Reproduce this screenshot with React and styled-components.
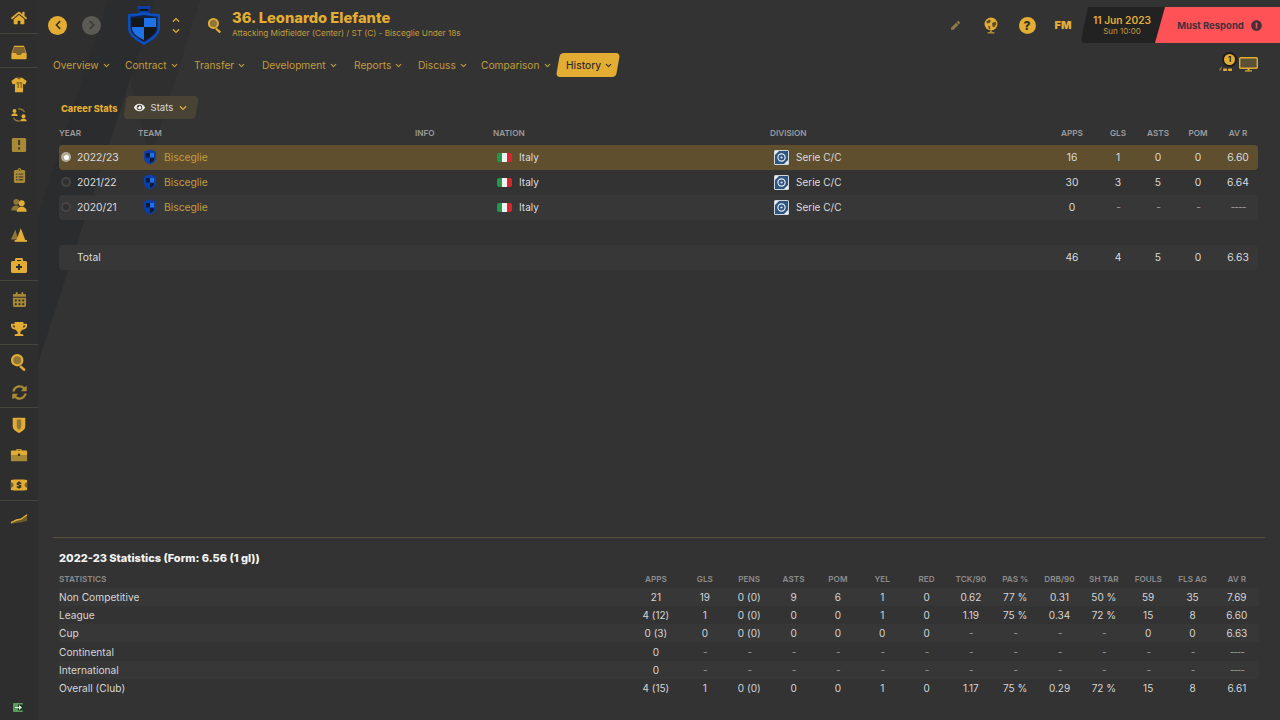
import styled, { createGlobalStyle } from 'styled-components'
import {
  FaHome,
  FaClipboardList,
  FaBriefcaseMedical,
  FaCalendarAlt,
  FaTrophy,
  FaSyncAlt,
  FaEye,
  FaChevronDown,
  FaChevronLeft,
  FaChevronRight,
  FaChevronUp,
  FaExclamationCircle,
  FaPen,
} from 'react-icons/fa'
import { FiChevronDown } from 'react-icons/fi'

const gold = '#e3ad33'
const goldSoft = '#c29c3c'
const goldDim = '#a88936'

const GlobalStyle = createGlobalStyle`
  html, body {
    margin: 0;
    background: #333333;
  }
  body {
    font-family: Inter, "Liberation Sans", sans-serif;
  }
`

const Page = styled.div`
  display: flex;
  width: 1280px;
  height: 720px;
  overflow: hidden;
  background: #333333;
`

const Sidebar = styled.aside`
  display: flex;
  flex-direction: column;
  width: 38px;
  flex: none;
  background: #2e2e2e;
`

const SideGroup = styled.div`
  display: flex;
  flex-direction: column;
  padding-top: ${({ $top }) => $top}px;
  border-bottom: 1px solid ${({ $last }) => ($last ? 'transparent' : '#47443d')};
`

const SideItem = styled.div`
  display: flex;
  align-items: center;
  justify-content: center;
  height: 30px;
  color: ${({ $dim }) => ($dim ? goldDim : gold)};
  font-size: ${({ $dim }) => ($dim ? 15 : 16)}px;
`

const SideFoot = styled.div`
  display: flex;
  justify-content: center;
  margin-top: auto;
  padding-bottom: 8px;
`

const Streak = styled.div`
  position: absolute;
  inset: 0;
  background: ${({ $color }) => $color};
  clip-path: polygon(${({ $points }) => $points});
`

const Main = styled.main`
  position: relative;
  display: flex;
  flex-direction: column;
  flex: 1;
  min-width: 0;

  & > :not(${Streak}) {
    position: relative;
    z-index: 1;
  }
`

const Header = styled.header`
  display: flex;
  align-items: center;
  height: 50px;
  padding-left: 10px;
`

const RoundButton = styled.span`
  display: flex;
  align-items: center;
  justify-content: center;
  width: 19px;
  height: 19px;
  margin-right: ${({ $gap }) => $gap}px;
  border-radius: 50%;
  background: ${({ $off }) => ($off ? '#5c5a55' : gold)};
  color: ${({ $off }) => ($off ? '#3a3a38' : '#33302a')};
  font-size: 10px;
`

const Crest = styled.svg`
  width: 34px;
  height: 40px;
  margin-top: 2px;
`

const Stepper = styled.span`
  display: flex;
  flex-direction: column;
  gap: 3px;
  margin-left: 11px;
  color: ${gold};
  font-size: 8px;
`

const SearchIcon = styled.svg`
  width: 16px;
  height: 16px;
  margin: 0 9px 0 27px;
`

const TitleBlock = styled.div`
  display: flex;
  flex-direction: column;
  gap: 1px;
  padding-bottom: 3px;
`

const Title = styled.h1`
  margin: 0;
  color: ${gold};
  font-size: 14.7px;
  font-weight: 800;
  line-height: 17px;
`

const Subtitle = styled.p`
  margin: 0;
  color: ${goldSoft};
  font-size: 8.2px;
  line-height: 10px;
`

const Tools = styled.div`
  display: flex;
  align-items: center;
  margin-left: auto;
  height: 36px;
`

const Tool = styled.span`
  display: flex;
  align-items: center;
  justify-content: center;
  width: 36px;
  color: ${({ $dim }) => ($dim ? '#8a7a45' : gold)};
  font-size: ${({ $size }) => $size}px;
  font-weight: 900;
`

const HelpDot = styled.span`
  display: flex;
  align-items: center;
  justify-content: center;
  width: 17px;
  height: 17px;
  border-radius: 50%;
  background: ${gold};
  color: #33302a;
  font-size: 12px;
  font-weight: 800;
`

const DateBox = styled.div`
  display: flex;
  flex-direction: column;
  align-items: center;
  justify-content: center;
  width: 84px;
  height: 36px;
  padding-right: 2px;
  box-sizing: border-box;
  background: #222222;
  clip-path: polygon(7px 0, 100% 0, 100% 100%, 2px 100%, 0 92%);
`

const DateLine = styled.span`
  color: ${gold};
  font-size: 10.2px;
  font-weight: 600;
  line-height: 12px;
`

const TimeLine = styled.span`
  color: ${goldSoft};
  font-size: 8px;
  line-height: 10px;
`

const Respond = styled.div`
  display: flex;
  align-items: center;
  justify-content: center;
  gap: 7px;
  width: 125px;
  height: 36px;
  margin-left: -10px;
  padding-left: 4px;
  box-sizing: border-box;
  background: #ff5257;
  clip-path: polygon(10px 0, 100% 0, 100% 100%, 0 100%);
  color: #43303a;
  font-size: 9.5px;
  font-weight: 700;

  svg {
    font-size: 11px;
  }
`

const Nav = styled.nav`
  display: flex;
  align-items: center;
  height: 28px;
  margin-top: 1px;
  padding-left: 15px;
`

const NavItem = styled.span`
  position: relative;
  display: flex;
  align-items: center;
  gap: 3px;
  width: ${({ $w }) => $w}px;
  color: ${({ $active }) => ($active ? '#33302a' : goldSoft)};
  font-size: 10.2px;
  font-weight: ${({ $active }) => ($active ? 500 : 400)};
  line-height: 24px;

  svg {
    width: 9px;
    height: 9px;
    stroke-width: 3;
  }

  ${({ $active }) =>
    $active &&
    `
    z-index: 0;
    padding-left: 8px;
    box-sizing: border-box;
    &::before {
      content: '';
      position: absolute;
      z-index: -1;
      inset: 0;
      border-radius: 4px;
      background: ${gold};
      transform: skewX(-10deg);
    }
  `}
`

const NavEnd = styled.div`
  position: relative;
  display: flex;
  gap: 5px;
  margin-left: auto;
  margin-right: 22px;
`

const Badge = styled.span`
  position: absolute;
  top: -5px;
  left: 4px;
  display: flex;
  align-items: center;
  justify-content: center;
  width: 15px;
  height: 15px;
  box-sizing: border-box;
  border: 2px solid #1d1d1b;
  border-radius: 50%;
  background: ${gold};
  color: #222;
  font-size: 7.5px;
  font-weight: 700;
`

const Content = styled.section`
  display: flex;
  flex-direction: column;
  width: 1199px;
  margin-left: 21px;
  padding-top: 17px;
`

const TableBar = styled.div`
  display: flex;
  align-items: center;
  gap: 7px;
  height: 23px;
`

const BarLabel = styled.span`
  padding: 1px 0 0 2px;
  color: ${gold};
  font-size: 9.2px;
  font-weight: 800;
`

const ViewButton = styled.span`
  position: relative;
  z-index: 0;
  display: flex;
  align-items: center;
  gap: 5px;
  width: 72px;
  height: 23px;
  margin-left: 1px;
  padding-left: 9px;
  box-sizing: border-box;
  color: #d8d8d8;
  font-size: 9.6px;

  &::before {
    content: '';
    position: absolute;
    z-index: -1;
    inset: 0;
    border-radius: 4px;
    background: #494335;
    transform: skewX(-8deg);
  }

  svg:first-child {
    font-size: 11px;
  }

  svg:last-child {
    margin-left: 1px;
    color: ${gold};
    font-size: 8px;
  }
`

const careerGrid = '79px 277px 78px 277px 282px 46px 40px 40px 40px 40px'

const HeadRow = styled.div`
  display: grid;
  grid-template-columns: ${careerGrid};
  align-items: center;
  height: 14px;
  margin: 7px 0 5px;
`

const HeadCell = styled.span`
  padding-right: ${({ $shift }) => ($shift ? 6 : 0)}px;
  color: #9b9b9b;
  font-size: 8.2px;
  font-weight: 600;
  text-align: ${({ $center }) => ($center ? 'center' : 'left')};
  white-space: nowrap;
`

const CareerRow = styled.div`
  display: grid;
  grid-template-columns: ${careerGrid};
  align-items: center;
  height: 25px;
  margin-top: ${({ $total }) => ($total ? 25 : 0)}px;
  padding-bottom: 1px;
  box-sizing: border-box;
  border-radius: 4px;
  background: ${({ $selected, $shade }) =>
    $selected ? '#5f4f2f' : $shade ? '#373737' : 'transparent'};
  color: #dcdcdc;
  font-size: 10.3px;
`

const YearCell = styled.span`
  display: flex;
  align-items: center;
  gap: 6px;
  padding-left: ${({ $plain }) => ($plain ? 18 : 2)}px;
`

const Radio = styled.span`
  display: flex;
  align-items: center;
  justify-content: center;
  width: 10px;
  height: 10px;
  border-radius: 50%;
  background: ${({ $on }) => ($on ? '#b3ab99' : '#454545')};

  &::after {
    content: '';
    width: ${({ $on }) => ($on ? 5 : 6)}px;
    height: ${({ $on }) => ($on ? 5 : 6)}px;
    border-radius: 50%;
    background: ${({ $on }) => ($on ? '#ffffff' : '#2f2f2f')};
  }
`

const TeamCell = styled.span`
  display: flex;
  align-items: center;
  gap: 7px;
  padding-left: 5px;
  color: ${goldSoft};
`

const MiniCrest = styled.svg`
  width: 14px;
  height: 16px;
`

const FlagCell = styled.span`
  display: flex;
  align-items: center;
  gap: 7px;
  padding-left: 4px;
  font-size: 10px;
`

const Flag = styled.span`
  width: 15px;
  height: 9px;
  border-radius: 2px;
  background: linear-gradient(to right, #1f9a4d 33%, #f2f2f2 33%, #f2f2f2 66%, #d8262e 66%);
`

const LeagueLogo = styled.svg`
  width: 15px;
  height: 15px;
`

const ValueCell = styled.span`
  padding-right: ${({ $shift }) => ($shift ? 6 : 0)}px;
  text-align: center;
  white-space: nowrap;
  color: ${({ $dash }) => ($dash ? '#9b9b9b' : 'inherit')};
  letter-spacing: ${({ $dash }) => ($dash ? '-1px' : 'normal')};
`

const StatsPanel = styled.section`
  display: flex;
  flex-direction: column;
  margin: auto 15px 0;
  padding: 13px 0 23px 6px;
  border-top: 1px solid #5a4f38;
`

const PanelTitle = styled.h2`
  margin: 0 0 7px;
  color: #f2f2f2;
  font-size: 11px;
  font-weight: 800;
  line-height: 14px;
`

const statsGrid = 'minmax(0, 1fr) 53.7px repeat(13, 44.33px)'

const StatsHead = styled.div`
  display: grid;
  grid-template-columns: ${statsGrid};
  align-items: center;
  width: 1200px;
  height: 14px;
  margin-bottom: 2px;
`

const StatsHeadCell = styled.span`
  color: #8c8c8c;
  font-size: 8.2px;
  font-weight: 600;
  text-align: ${({ $left }) => ($left ? 'left' : 'center')};
  white-space: nowrap;
`

const StatsRow = styled.div`
  display: grid;
  grid-template-columns: ${statsGrid};
  align-items: center;
  width: 1200px;
  height: 18.2px;
  background: ${({ $shade }) => ($shade ? '#373737' : 'transparent')};
  color: #d6d6d6;
  font-size: 10px;
`

const StatLabel = styled.span`
  font-size: 10.2px;
  white-space: nowrap;
`

const Icon = styled.svg`
  width: ${({ $w }) => $w || 18}px;
  height: ${({ $h }) => $h || 18}px;
  fill: ${gold};
`

const ShirtNumber = styled.text`
  fill: #7a5f22;
  font-size: 8px;
  font-weight: 700;
  text-anchor: middle;
`

const TrayIcon = () => (
  <Icon viewBox="0 0 20 20">
    <path d="M4.500 3h11l3 9v5a1 1 0 0 1-1 1h-15a1 1 0 0 1-1-1v-5z" />
    <path d="M4.600 4.400h10.800l2 6.600h-4l-1.400 2.400h-4L6.600 11h-4z" fill="#7a6330" />
  </Icon>
)

const ShirtIcon = () => (
  <Icon viewBox="0 0 20 20">
    <path d="M6.500 2h7l5 3.500-1.500 4-2.500-1V18h-9V8.500L3 9.500l-1.500-4z" />
    <path d="M8 2h4l-1 1.500H9z" fill="#7a5f22" />
    <ShirtNumber x="10" y="13.500">11</ShirtNumber>
  </Icon>
)

const TransferIcon = () => (
  <Icon viewBox="0 0 20 20">
    <path d="M9 3.500c3.500-.5 6 1 7 3.500M11 16.500c-3.500.5-6-1-7-3.500" fill="none" stroke="#8f7538" strokeWidth="1.600" />
    <circle cx="5" cy="5.500" r="2.200" />
    <path d="M1.500 11c0-2 1.500-3 3.500-3s3.500 1 3.500 3z" />
    <circle cx="15" cy="11.500" r="2.200" />
    <path d="M11.500 17c0-2 1.500-3 3.500-3s3.500 1 3.500 3z" />
  </Icon>
)

const AlertIcon = () => (
  <Icon viewBox="0 0 18 18" $w={16} $h={16}>
    <rect x="1" y="1" width="16" height="16" rx="1.500" fill="#a88936" />
    <rect x="8" y="3.500" width="2.200" height="5.500" fill="#3d3725" />
    <rect x="8" y="11.500" width="2.200" height="2.600" fill="#3d3725" />
  </Icon>
)

const FriendsIcon = () => (
  <Icon viewBox="0 0 20 20">
    <circle cx="7" cy="6.500" r="3.200" fill="#8f7538" />
    <path d="M1.500 16c0-3.500 2.500-5.500 5.500-5.500 1.200 0 2 .3 3 .8L7.500 16z" fill="#8f7538" />
    <circle cx="13" cy="8" r="3.300" />
    <path d="M7.500 17.500c0-3.500 2.500-5.500 5.500-5.500s5.500 2 5.500 5.500z" />
  </Icon>
)

const ConesIcon = () => (
  <Icon viewBox="0 0 20 20">
    <path d="M6 4 1 15h8z" fill="#8f7538" />
    <path d="M12 2.500 6.500 17h11z" />
    <rect x="5" y="15.500" width="14" height="2" rx=".5" />
  </Icon>
)

const LensIcon = () => (
  <Icon viewBox="0 0 20 20">
    <circle cx="8" cy="8" r="5.700" fill="#8f7538" stroke={gold} strokeWidth="2.400" />
    <rect x="11.500" y="13.500" width="7.500" height="2.800" rx="1" transform="rotate(42 12 14)" />
  </Icon>
)

const ShieldIcon = () => (
  <Icon viewBox="0 0 20 20">
    <path d="M3 2h14v9c0 4-3.500 6-7 8-3.500-2-7-4-7-8z" />
    <path d="M7.500 4h5v7c0 2-1.200 3.500-2.500 4.500C8.700 14.500 7.500 13 7.500 11z" fill="#8f7538" />
  </Icon>
)

const CaseIcon = () => (
  <Icon viewBox="0 0 20 20">
    <path d="M7 5V3.500h6V5h2.500V5H18a1 1 0 0 1 1 1v4H1V6a1 1 0 0 1 1-1zM8.500 5h3v-.5h-3z" />
    <path d="M1 10h18v6a1 1 0 0 1-1 1H2a1 1 0 0 1-1-1z" fill="#a88936" />
    <rect x="8.700" y="8.500" width="2.600" height="2.600" fill="#3d3725" />
  </Icon>
)

const MoneyIcon = () => (
  <Icon viewBox="0 0 20 20">
    <path d="M1 4.500 5 4h10l4 .5v11l-4 .5H5l-4-.5z" />
    <path d="M1 7c1.500 0 2.500 1 3 3-.5 2-1.500 3-3 3zM19 7c-1.500 0-2.500 1-3 3 .5 2 1.500 3 3 3z" fill="#7a6330" />
    <path d="M9 6h2v1.200h1.500v1.600H10v1h2.500v3.200H11V14H9v-1H7.500v-1.600H10v-1H7.500V7.200H9z" fill="#33302a" />
  </Icon>
)

const TrendIcon = () => (
  <Icon viewBox="0 0 20 20">
    <path d="M1 16v-1l6-3 5-1 7-5v7l-7 2z" fill="#6d5a2c" />
    <path d="M1 14.500 7 11.500l5-1 7-5v1.800l-6.500 4.700-5 1L1 16z" />
  </Icon>
)

const ExitIcon = () => (
  <svg width="12" height="9" viewBox="0 0 12 9">
    <rect width="10" height="9" rx="1" fill="#5c9c5c" />
    <rect x="5" y="1.500" width="7" height="6" fill="#20352a" />
    <path d="M2 4h4V2l3 2.500L6 7V5H2z" fill="#dff0df" />
  </svg>
)

const GlobeIcon = () => (
  <svg width="16" height="17" viewBox="0 0 16 17">
    <circle cx="8" cy="7" r="6.500" fill={gold} />
    <path d="M3 4.500 6.500 2.500l1.500 1.500-1.500 2-2 .5zM9 6l3.500-1.500 1 2.500-2.500 3.500-1.500-1zM5 8.500l2 1 .5 2.500-1.500.5z" fill="#5f4f2f" />
    <rect x="7" y="13.500" width="2" height="1.500" fill={goldDim} />
    <rect x="4.500" y="15" width="7" height="1.500" rx=".5" fill={goldDim} />
  </svg>
)

const ClubCrest = () => (
  <Crest viewBox="0 0 34 40">
    <path d="M10.500 0h13v2.500l-2 4.500h-9l-2-4.500z" fill="#0b3fa6" />
    <rect x="12.500" y="3" width="9" height="2" fill="#10141d" />
    <path d="M1 8c5 0 11-1 16-2 5 1 11 2 16 2v14c0 8-9 13-16 17C10 35 1 30 1 22z" fill="#0d4ebf" />
    <path d="M3.500 10.500c5 0 9-.7 13.500-1.500 4.500.8 8.500 1.500 13.500 1.500V22c0 6-7.500 10.500-13.500 14C11 32.500 3.500 28 3.500 22z" fill="#10203f" />
    <path d="M5 12h12v9H5z" fill="#15161a" />
    <path d="M17 12h12v9H17z" fill="#1e71e6" />
    <path d="M5 21h12v13c-5-2.500-12-6-12-12z" fill="#1e71e6" />
    <path d="M17 21h12v1c0 6-7 9.500-12 12z" fill="#15161a" />
  </Crest>
)

const TeamCrest = () => (
  <MiniCrest viewBox="0 0 14 16">
    <path d="M1 2.500 7 .5l6 2v6.500c0 3.500-3 5.500-6 6.500-3-1-6-3-6-6.500z" fill="#0b3fa6" />
    <path d="M3 4h4v4.500H3zM7 8.500h4V11c-1 1.500-2.500 2.500-4 3z" fill="#0d1a3a" />
    <path d="M7 4h4v4.500H7z" fill="#1e71e6" />
  </MiniCrest>
)

const SerieLogo = () => (
  <LeagueLogo viewBox="0 0 15 15">
    <rect width="15" height="15" rx="1.500" fill="#cfd6de" />
    <rect x="1" y="1" width="13" height="13" fill="#2f5480" />
    <circle cx="7.500" cy="7.500" r="3.600" fill="none" stroke="#e6edf4" strokeWidth="1.200" />
    <circle cx="7.500" cy="7.500" r="1.100" fill="#e6edf4" />
    <path d="M1 1h4L1 5zM14 14h-4l4-4z" fill="#e6edf4" />
  </LeagueLogo>
)

const MonitorIcon = () => (
  <svg width="19" height="15" viewBox="0 0 19 15">
    <rect x=".7" y=".7" width="17.600" height="10.600" rx="1" fill="#5a5138" stroke={gold} strokeWidth="1.400" />
    <rect x="8.500" y="12" width="2" height="1.500" fill={gold} />
    <rect x="6" y="13.300" width="7" height="1.200" fill={gold} />
  </svg>
)

const PeopleIcon = () => (
  <svg width="16" height="16" viewBox="0 0 16 16">
    <path d="M1 13c.5-1.500 2-3 3-3.500v1.500L2 14z" fill="#8f7538" />
    <rect x="5" y="11.500" width="4" height="2.500" rx=".8" fill={gold} />
    <rect x="10" y="11.500" width="4" height="2.500" rx=".8" fill={gold} />
  </svg>
)

const sideGroups = [
  { top: 3, items: [{ id: 'home', icon: <FaHome /> }] },
  { top: 3, items: [{ id: 'tray', icon: <TrayIcon /> }] },
  {
    top: 2,
    items: [
      { id: 'shirt', icon: <ShirtIcon /> },
      { id: 'transfer', icon: <TransferIcon /> },
      { id: 'alert', icon: <AlertIcon /> },
      { id: 'clipboard', icon: <FaClipboardList />, dim: true },
      { id: 'friends', icon: <FriendsIcon /> },
      { id: 'cones', icon: <ConesIcon /> },
      { id: 'medical', icon: <FaBriefcaseMedical /> },
    ],
  },
  {
    top: 3,
    items: [
      { id: 'calendar', icon: <FaCalendarAlt />, dim: true },
      { id: 'trophy', icon: <FaTrophy /> },
    ],
  },
  {
    top: 2,
    items: [
      { id: 'lens', icon: <LensIcon /> },
      { id: 'sync', icon: <FaSyncAlt />, dim: true },
    ],
  },
  {
    top: 2,
    items: [
      { id: 'shield', icon: <ShieldIcon /> },
      { id: 'case', icon: <CaseIcon /> },
      { id: 'money', icon: <MoneyIcon /> },
    ],
  },
  { top: 2, last: true, items: [{ id: 'trend', icon: <TrendIcon /> }] },
]

const navItems = [
  ['Overview', 72],
  ['Contract', 69],
  ['Transfer', 68],
  ['Development', 92],
  ['Reports', 64],
  ['Discuss', 63],
  ['Comparison', 77],
]

const careerRows = [
  { year: '2022/23', values: ['16', '1', '0', '0', '6.60'], selected: true },
  { year: '2021/22', values: ['30', '3', '5', '0', '6.64'] },
  { year: '2020/21', values: ['0', '-', '-', '-', '----'], shade: true },
]

const statColumns = ['APPS', 'GLS', 'PENS', 'ASTS', 'POM', 'YEL', 'RED', 'TCK/90', 'PAS %', 'DRB/90', 'SH TAR', 'FOULS', 'FLS AG', 'AV R']

const statRows = [
  ['Non Competitive', '21', '19', '0 (0)', '9', '6', '1', '0', '0.62', '77 %', '0.31', '50 %', '59', '35', '7.69'],
  ['League', '4 (12)', '1', '0 (0)', '0', '0', '1', '0', '1.19', '75 %', '0.34', '72 %', '15', '8', '6.60'],
  ['Cup', '0 (3)', '0', '0 (0)', '0', '0', '0', '0', '-', '-', '-', '-', '0', '0', '6.63'],
  ['Continental', '0', '-', '-', '-', '-', '-', '-', '-', '-', '-', '-', '-', '-', '----'],
  ['International', '0', '-', '-', '-', '-', '-', '-', '-', '-', '-', '-', '-', '-', '----'],
  ['Overall (Club)', '4 (15)', '1', '0 (0)', '0', '0', '1', '0', '1.17', '75 %', '0.29', '72 %', '15', '8', '6.61'],
]

const isDash = (value) => /^-+$/.test(value)

function CareerValues({ values }) {
  return values.map((value, index) => (
    <ValueCell key={index} $shift={index === 0} $dash={isDash(value)}>
      {value}
    </ValueCell>
  ))
}

export default function App() {
  return (
    <Page>
      <GlobalStyle />
      <Sidebar>
        {sideGroups.map((group, index) => (
          <SideGroup key={index} $top={group.top} $last={group.last}>
            {group.items.map((item) => (
              <SideItem key={item.id} $dim={item.dim}>
                {item.icon}
              </SideItem>
            ))}
          </SideGroup>
        ))}
        <SideFoot>
          <ExitIcon />
        </SideFoot>
      </Sidebar>
      <Main>
        <Streak $color="#2f2f2f" $points="0 0, 70px 0, 0 217px" />
        <Streak $color="#2b2c2d" $points="70px 0, 118px 0, 0 363px, 0 217px" />
        <Streak $color="#2f2f2f" $points="118px 0, 162px 0, 112px 160px, 92px 80px" />
        <Header>
          <RoundButton $gap={15}>
            <FaChevronLeft />
          </RoundButton>
          <RoundButton $off $gap={26}>
            <FaChevronRight />
          </RoundButton>
          <ClubCrest />
          <Stepper>
            <FaChevronUp />
            <FaChevronDown />
          </Stepper>
          <SearchIcon viewBox="0 0 20 20">
            <circle cx="8" cy="8" r="5.700" fill="#8f7538" stroke={gold} strokeWidth="2.400" />
            <rect x="11.500" y="13.500" width="7.500" height="2.800" rx="1" fill={gold} transform="rotate(42 12 14)" />
          </SearchIcon>
          <TitleBlock>
            <Title>36. Leonardo Elefante</Title>
            <Subtitle>Attacking Midfielder (Center) / ST (C) - Bisceglie Under 18s</Subtitle>
          </TitleBlock>
          <Tools>
            <Tool $dim $size={9}>
              <FaPen />
            </Tool>
            <Tool>
              <GlobeIcon />
            </Tool>
            <Tool>
              <HelpDot>?</HelpDot>
            </Tool>
            <Tool $size={11}>FM</Tool>
            <DateBox>
              <DateLine>11 Jun 2023</DateLine>
              <TimeLine>Sun 10:00</TimeLine>
            </DateBox>
            <Respond>
              Must Respond
              <FaExclamationCircle />
            </Respond>
          </Tools>
        </Header>
        <Nav>
          {navItems.map(([label, width]) => (
            <NavItem key={label} $w={width}>
              {label}
              <FiChevronDown />
            </NavItem>
          ))}
          <NavItem $active $w={60}>
            History
            <FiChevronDown />
          </NavItem>
          <NavEnd>
            <PeopleIcon />
            <Badge>1</Badge>
            <MonitorIcon />
          </NavEnd>
        </Nav>
        <Content>
          <TableBar>
            <BarLabel>Career Stats</BarLabel>
            <ViewButton>
              <FaEye color="#f0f0f0" />
              Stats
              <FaChevronDown />
            </ViewButton>
          </TableBar>
          <HeadRow>
            <HeadCell>YEAR</HeadCell>
            <HeadCell>TEAM</HeadCell>
            <HeadCell>INFO</HeadCell>
            <HeadCell>NATION</HeadCell>
            <HeadCell>DIVISION</HeadCell>
            <HeadCell $center $shift>APPS</HeadCell>
            <HeadCell $center>GLS</HeadCell>
            <HeadCell $center>ASTS</HeadCell>
            <HeadCell $center>POM</HeadCell>
            <HeadCell $center>AV R</HeadCell>
          </HeadRow>
          {careerRows.map((row) => (
            <CareerRow key={row.year} $selected={row.selected} $shade={row.shade}>
              <YearCell>
                <Radio $on={row.selected} />
                {row.year}
              </YearCell>
              <TeamCell>
                <TeamCrest />
                Bisceglie
              </TeamCell>
              <span />
              <FlagCell>
                <Flag />
                Italy
              </FlagCell>
              <FlagCell>
                <SerieLogo />
                Serie C/C
              </FlagCell>
              <CareerValues values={row.values} />
            </CareerRow>
          ))}
          <CareerRow $total $shade>
            <YearCell $plain>Total</YearCell>
            <span />
            <span />
            <span />
            <span />
            <CareerValues values={['46', '4', '5', '0', '6.63']} />
          </CareerRow>
        </Content>
        <StatsPanel>
          <PanelTitle>2022-23 Statistics (Form: 6.56 (1 gl))</PanelTitle>
          <StatsHead>
            <StatsHeadCell $left>STATISTICS</StatsHeadCell>
            {statColumns.map((column) => (
              <StatsHeadCell key={column}>{column}</StatsHeadCell>
            ))}
          </StatsHead>
          {statRows.map(([label, ...values], index) => (
            <StatsRow key={label} $shade={index % 2 === 0}>
              <StatLabel>{label}</StatLabel>
              {values.map((value, cell) => (
                <ValueCell key={cell} $dash={isDash(value)}>
                  {value}
                </ValueCell>
              ))}
            </StatsRow>
          ))}
        </StatsPanel>
      </Main>
    </Page>
  )
}
